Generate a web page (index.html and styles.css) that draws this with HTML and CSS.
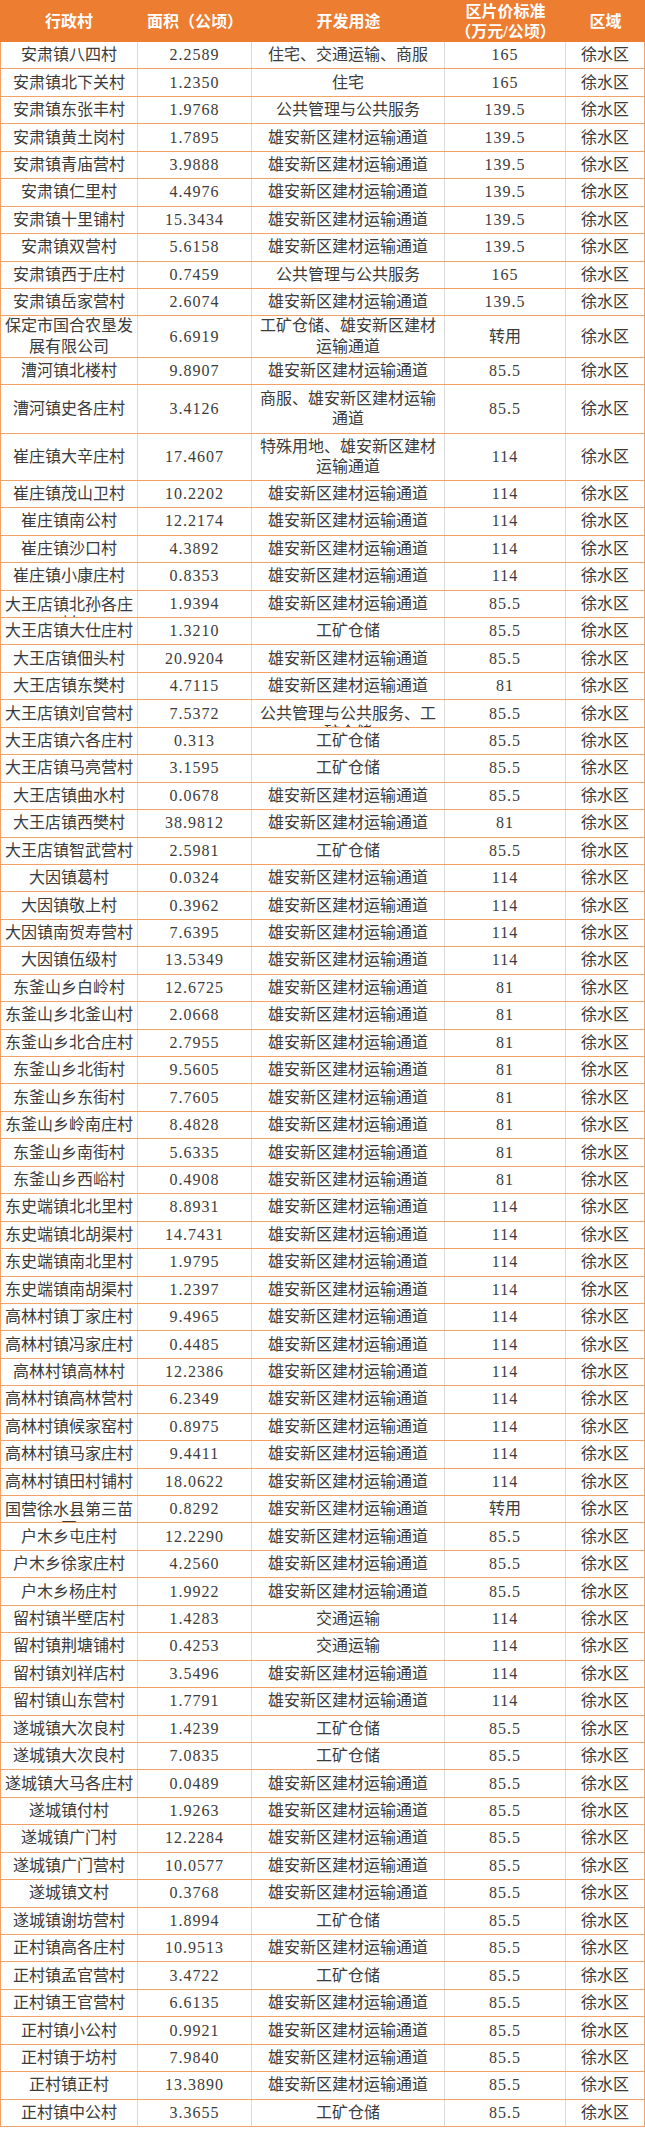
FILE: index.html
```html
<!DOCTYPE html>
<html lang="zh">
<head>
<meta charset="utf-8">
<title>徐水区区片价标准</title>
<link rel="stylesheet" href="styles.css">
</head>
<body>
<div class="sheet">
  <div class="row head">
    <div class="c">行政村</div>
    <div class="c">面积（公顷）</div>
    <div class="c">开发用途</div>
    <div class="c">区片价标准<br>（万元/公顷）</div>
    <div class="c">区域</div>
  </div>
  <div class="row"><div class="c">安肃镇八四村</div><div class="c num">2.2589</div><div class="c">住宅、交通运输、商服</div><div class="c num">165</div><div class="c">徐水区</div></div>
  <div class="row"><div class="c">安肃镇北下关村</div><div class="c num">1.2350</div><div class="c">住宅</div><div class="c num">165</div><div class="c">徐水区</div></div>
  <div class="row"><div class="c">安肃镇东张丰村</div><div class="c num">1.9768</div><div class="c">公共管理与公共服务</div><div class="c num">139.5</div><div class="c">徐水区</div></div>
  <div class="row"><div class="c">安肃镇黄土岗村</div><div class="c num">1.7895</div><div class="c">雄安新区建材运输通道</div><div class="c num">139.5</div><div class="c">徐水区</div></div>
  <div class="row"><div class="c">安肃镇青庙营村</div><div class="c num">3.9888</div><div class="c">雄安新区建材运输通道</div><div class="c num">139.5</div><div class="c">徐水区</div></div>
  <div class="row"><div class="c">安肃镇仁里村</div><div class="c num">4.4976</div><div class="c">雄安新区建材运输通道</div><div class="c num">139.5</div><div class="c">徐水区</div></div>
  <div class="row"><div class="c">安肃镇十里铺村</div><div class="c num">15.3434</div><div class="c">雄安新区建材运输通道</div><div class="c num">139.5</div><div class="c">徐水区</div></div>
  <div class="row"><div class="c">安肃镇双营村</div><div class="c num">5.6158</div><div class="c">雄安新区建材运输通道</div><div class="c num">139.5</div><div class="c">徐水区</div></div>
  <div class="row"><div class="c">安肃镇西于庄村</div><div class="c num">0.7459</div><div class="c">公共管理与公共服务</div><div class="c num">165</div><div class="c">徐水区</div></div>
  <div class="row"><div class="c">安肃镇岳家营村</div><div class="c num">2.6074</div><div class="c">雄安新区建材运输通道</div><div class="c num">139.5</div><div class="c">徐水区</div></div>
  <div class="row tall-a"><div class="c wrap">保定市国合农垦发展有限公司</div><div class="c num">6.6919</div><div class="c wrap">工矿仓储、雄安新区建材运输通道</div><div class="c">转用</div><div class="c">徐水区</div></div>
  <div class="row"><div class="c">漕河镇北楼村</div><div class="c num">9.8907</div><div class="c">雄安新区建材运输通道</div><div class="c num">85.5</div><div class="c">徐水区</div></div>
  <div class="row tall-b"><div class="c">漕河镇史各庄村</div><div class="c num">3.4126</div><div class="c wrap">商服、雄安新区建材运输通道</div><div class="c num">85.5</div><div class="c">徐水区</div></div>
  <div class="row tall-c"><div class="c">崔庄镇大辛庄村</div><div class="c num">17.4607</div><div class="c wrap">特殊用地、雄安新区建材运输通道</div><div class="c num">114</div><div class="c">徐水区</div></div>
  <div class="row"><div class="c">崔庄镇茂山卫村</div><div class="c num">10.2202</div><div class="c">雄安新区建材运输通道</div><div class="c num">114</div><div class="c">徐水区</div></div>
  <div class="row"><div class="c">崔庄镇南公村</div><div class="c num">12.2174</div><div class="c">雄安新区建材运输通道</div><div class="c num">114</div><div class="c">徐水区</div></div>
  <div class="row"><div class="c">崔庄镇沙口村</div><div class="c num">4.3892</div><div class="c">雄安新区建材运输通道</div><div class="c num">114</div><div class="c">徐水区</div></div>
  <div class="row"><div class="c">崔庄镇小康庄村</div><div class="c num">0.8353</div><div class="c">雄安新区建材运输通道</div><div class="c num">114</div><div class="c">徐水区</div></div>
  <div class="row"><div class="c over">大王店镇北孙各庄村</div><div class="c num">1.9394</div><div class="c">雄安新区建材运输通道</div><div class="c num">85.5</div><div class="c">徐水区</div></div>
  <div class="row"><div class="c">大王店镇大仕庄村</div><div class="c num">1.3210</div><div class="c">工矿仓储</div><div class="c num">85.5</div><div class="c">徐水区</div></div>
  <div class="row"><div class="c">大王店镇佃头村</div><div class="c num">20.9204</div><div class="c">雄安新区建材运输通道</div><div class="c num">85.5</div><div class="c">徐水区</div></div>
  <div class="row"><div class="c">大王店镇东樊村</div><div class="c num">4.7115</div><div class="c">雄安新区建材运输通道</div><div class="c num">81</div><div class="c">徐水区</div></div>
  <div class="row"><div class="c">大王店镇刘官营村</div><div class="c num">7.5372</div><div class="c over">公共管理与公共服务、工矿仓储</div><div class="c num">85.5</div><div class="c">徐水区</div></div>
  <div class="row"><div class="c">大王店镇六各庄村</div><div class="c num">0.313</div><div class="c">工矿仓储</div><div class="c num">85.5</div><div class="c">徐水区</div></div>
  <div class="row"><div class="c">大王店镇马亮营村</div><div class="c num">3.1595</div><div class="c">工矿仓储</div><div class="c num">85.5</div><div class="c">徐水区</div></div>
  <div class="row"><div class="c">大王店镇曲水村</div><div class="c num">0.0678</div><div class="c">雄安新区建材运输通道</div><div class="c num">85.5</div><div class="c">徐水区</div></div>
  <div class="row"><div class="c">大王店镇西樊村</div><div class="c num">38.9812</div><div class="c">雄安新区建材运输通道</div><div class="c num">81</div><div class="c">徐水区</div></div>
  <div class="row"><div class="c">大王店镇智武营村</div><div class="c num">2.5981</div><div class="c">工矿仓储</div><div class="c num">85.5</div><div class="c">徐水区</div></div>
  <div class="row"><div class="c">大因镇葛村</div><div class="c num">0.0324</div><div class="c">雄安新区建材运输通道</div><div class="c num">114</div><div class="c">徐水区</div></div>
  <div class="row"><div class="c">大因镇敬上村</div><div class="c num">0.3962</div><div class="c">雄安新区建材运输通道</div><div class="c num">114</div><div class="c">徐水区</div></div>
  <div class="row"><div class="c">大因镇南贺寿营村</div><div class="c num">7.6395</div><div class="c">雄安新区建材运输通道</div><div class="c num">114</div><div class="c">徐水区</div></div>
  <div class="row"><div class="c">大因镇伍级村</div><div class="c num">13.5349</div><div class="c">雄安新区建材运输通道</div><div class="c num">114</div><div class="c">徐水区</div></div>
  <div class="row"><div class="c">东釜山乡白岭村</div><div class="c num">12.6725</div><div class="c">雄安新区建材运输通道</div><div class="c num">81</div><div class="c">徐水区</div></div>
  <div class="row"><div class="c">东釜山乡北釜山村</div><div class="c num">2.0668</div><div class="c">雄安新区建材运输通道</div><div class="c num">81</div><div class="c">徐水区</div></div>
  <div class="row"><div class="c">东釜山乡北合庄村</div><div class="c num">2.7955</div><div class="c">雄安新区建材运输通道</div><div class="c num">81</div><div class="c">徐水区</div></div>
  <div class="row"><div class="c">东釜山乡北街村</div><div class="c num">9.5605</div><div class="c">雄安新区建材运输通道</div><div class="c num">81</div><div class="c">徐水区</div></div>
  <div class="row"><div class="c">东釜山乡东街村</div><div class="c num">7.7605</div><div class="c">雄安新区建材运输通道</div><div class="c num">81</div><div class="c">徐水区</div></div>
  <div class="row"><div class="c">东釜山乡岭南庄村</div><div class="c num">8.4828</div><div class="c">雄安新区建材运输通道</div><div class="c num">81</div><div class="c">徐水区</div></div>
  <div class="row"><div class="c">东釜山乡南街村</div><div class="c num">5.6335</div><div class="c">雄安新区建材运输通道</div><div class="c num">81</div><div class="c">徐水区</div></div>
  <div class="row"><div class="c">东釜山乡西峪村</div><div class="c num">0.4908</div><div class="c">雄安新区建材运输通道</div><div class="c num">81</div><div class="c">徐水区</div></div>
  <div class="row"><div class="c">东史端镇北北里村</div><div class="c num">8.8931</div><div class="c">雄安新区建材运输通道</div><div class="c num">114</div><div class="c">徐水区</div></div>
  <div class="row"><div class="c">东史端镇北胡渠村</div><div class="c num">14.7431</div><div class="c">雄安新区建材运输通道</div><div class="c num">114</div><div class="c">徐水区</div></div>
  <div class="row"><div class="c">东史端镇南北里村</div><div class="c num">1.9795</div><div class="c">雄安新区建材运输通道</div><div class="c num">114</div><div class="c">徐水区</div></div>
  <div class="row"><div class="c">东史端镇南胡渠村</div><div class="c num">1.2397</div><div class="c">雄安新区建材运输通道</div><div class="c num">114</div><div class="c">徐水区</div></div>
  <div class="row"><div class="c">高林村镇丁家庄村</div><div class="c num">9.4965</div><div class="c">雄安新区建材运输通道</div><div class="c num">114</div><div class="c">徐水区</div></div>
  <div class="row"><div class="c">高林村镇冯家庄村</div><div class="c num">0.4485</div><div class="c">雄安新区建材运输通道</div><div class="c num">114</div><div class="c">徐水区</div></div>
  <div class="row"><div class="c">高林村镇高林村</div><div class="c num">12.2386</div><div class="c">雄安新区建材运输通道</div><div class="c num">114</div><div class="c">徐水区</div></div>
  <div class="row"><div class="c">高林村镇高林营村</div><div class="c num">6.2349</div><div class="c">雄安新区建材运输通道</div><div class="c num">114</div><div class="c">徐水区</div></div>
  <div class="row"><div class="c">高林村镇候家窑村</div><div class="c num">0.8975</div><div class="c">雄安新区建材运输通道</div><div class="c num">114</div><div class="c">徐水区</div></div>
  <div class="row"><div class="c">高林村镇马家庄村</div><div class="c num">9.4411</div><div class="c">雄安新区建材运输通道</div><div class="c num">114</div><div class="c">徐水区</div></div>
  <div class="row"><div class="c">高林村镇田村铺村</div><div class="c num">18.0622</div><div class="c">雄安新区建材运输通道</div><div class="c num">114</div><div class="c">徐水区</div></div>
  <div class="row"><div class="c over">国营徐水县第三苗圃</div><div class="c num">0.8292</div><div class="c">雄安新区建材运输通道</div><div class="c">转用</div><div class="c">徐水区</div></div>
  <div class="row"><div class="c">户木乡屯庄村</div><div class="c num">12.2290</div><div class="c">雄安新区建材运输通道</div><div class="c num">85.5</div><div class="c">徐水区</div></div>
  <div class="row"><div class="c">户木乡徐家庄村</div><div class="c num">4.2560</div><div class="c">雄安新区建材运输通道</div><div class="c num">85.5</div><div class="c">徐水区</div></div>
  <div class="row"><div class="c">户木乡杨庄村</div><div class="c num">1.9922</div><div class="c">雄安新区建材运输通道</div><div class="c num">85.5</div><div class="c">徐水区</div></div>
  <div class="row"><div class="c">留村镇半壁店村</div><div class="c num">1.4283</div><div class="c">交通运输</div><div class="c num">114</div><div class="c">徐水区</div></div>
  <div class="row"><div class="c">留村镇荆塘铺村</div><div class="c num">0.4253</div><div class="c">交通运输</div><div class="c num">114</div><div class="c">徐水区</div></div>
  <div class="row"><div class="c">留村镇刘祥店村</div><div class="c num">3.5496</div><div class="c">雄安新区建材运输通道</div><div class="c num">114</div><div class="c">徐水区</div></div>
  <div class="row"><div class="c">留村镇山东营村</div><div class="c num">1.7791</div><div class="c">雄安新区建材运输通道</div><div class="c num">114</div><div class="c">徐水区</div></div>
  <div class="row"><div class="c">遂城镇大次良村</div><div class="c num">1.4239</div><div class="c">工矿仓储</div><div class="c num">85.5</div><div class="c">徐水区</div></div>
  <div class="row"><div class="c">遂城镇大次良村</div><div class="c num">7.0835</div><div class="c">工矿仓储</div><div class="c num">85.5</div><div class="c">徐水区</div></div>
  <div class="row"><div class="c">遂城镇大马各庄村</div><div class="c num">0.0489</div><div class="c">雄安新区建材运输通道</div><div class="c num">85.5</div><div class="c">徐水区</div></div>
  <div class="row"><div class="c">遂城镇付村</div><div class="c num">1.9263</div><div class="c">雄安新区建材运输通道</div><div class="c num">85.5</div><div class="c">徐水区</div></div>
  <div class="row"><div class="c">遂城镇广门村</div><div class="c num">12.2284</div><div class="c">雄安新区建材运输通道</div><div class="c num">85.5</div><div class="c">徐水区</div></div>
  <div class="row"><div class="c">遂城镇广门营村</div><div class="c num">10.0577</div><div class="c">雄安新区建材运输通道</div><div class="c num">85.5</div><div class="c">徐水区</div></div>
  <div class="row"><div class="c">遂城镇文村</div><div class="c num">0.3768</div><div class="c">雄安新区建材运输通道</div><div class="c num">85.5</div><div class="c">徐水区</div></div>
  <div class="row"><div class="c">遂城镇谢坊营村</div><div class="c num">1.8994</div><div class="c">工矿仓储</div><div class="c num">85.5</div><div class="c">徐水区</div></div>
  <div class="row"><div class="c">正村镇高各庄村</div><div class="c num">10.9513</div><div class="c">雄安新区建材运输通道</div><div class="c num">85.5</div><div class="c">徐水区</div></div>
  <div class="row"><div class="c">正村镇孟官营村</div><div class="c num">3.4722</div><div class="c">工矿仓储</div><div class="c num">85.5</div><div class="c">徐水区</div></div>
  <div class="row"><div class="c">正村镇王官营村</div><div class="c num">6.6135</div><div class="c">雄安新区建材运输通道</div><div class="c num">85.5</div><div class="c">徐水区</div></div>
  <div class="row"><div class="c">正村镇小公村</div><div class="c num">0.9921</div><div class="c">雄安新区建材运输通道</div><div class="c num">85.5</div><div class="c">徐水区</div></div>
  <div class="row"><div class="c">正村镇于坊村</div><div class="c num">7.9840</div><div class="c">雄安新区建材运输通道</div><div class="c num">85.5</div><div class="c">徐水区</div></div>
  <div class="row"><div class="c">正村镇正村</div><div class="c num">13.3890</div><div class="c">雄安新区建材运输通道</div><div class="c num">85.5</div><div class="c">徐水区</div></div>
  <div class="row"><div class="c">正村镇中公村</div><div class="c num">3.3655</div><div class="c">工矿仓储</div><div class="c num">85.5</div><div class="c">徐水区</div></div>
</div>
</body>
</html>
```

FILE: styles.css
```css
html, body {
  margin: 0;
  padding: 0;
  background: #ffffff;
}

.sheet {
  width: 645px;
  box-sizing: border-box;
  border-left: 1px solid #f0a267;
  border-right: 1px solid #f0a267;
  font-family: "Liberation Serif", "Noto Sans CJK SC", serif;
  font-size: 16px;
  color: #3b3b3b;
}

.row {
  display: grid;
  grid-template-columns: 137px 114px 193px 121px 1fr;
  height: 27.45px;
  box-sizing: border-box;
  border-bottom: 1px solid #f0a267;
}

.row.tall-a { height: 41.5px; }
.row.tall-b { height: 49px; }
.row.tall-c { height: 46.5px; }

.c {
  display: flex;
  align-items: center;
  justify-content: center;
  text-align: center;
  padding: 0 3px;
  border-right: 1px solid #dadada;
  overflow: hidden;
  line-height: 20px;
  white-space: normal;
}

.c:last-child {
  border-right: none;
}

.c.wrap {
  line-height: 20.5px;
}

.c.over {
  align-items: flex-start;
  padding-top: 4px;
  line-height: 19px;
}

.num {
  letter-spacing: 1px;
}

.row.head {
  height: 42px;
  background: #ed7d31;
  color: #ffffff;
  font-weight: bold;
  border-bottom: 1px solid #ed7d31;
  margin-left: -1px;
  margin-right: -1px;
  grid-template-columns: 138px 114px 193px 121px 1fr;
}

.row.head .c {
  border-right: none;
  line-height: 20px;
  padding-top: 3px;
  box-sizing: border-box;
}
```
